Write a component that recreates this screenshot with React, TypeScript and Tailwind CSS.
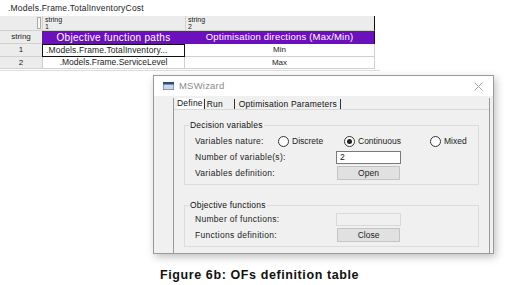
import React from 'react';

const FONT = { fontFamily: '"Liberation Sans", Arial, sans-serif' };

const Radio = ({ checked, label }: { checked?: boolean; label: string }) => (
  <div className="flex items-center gap-[3px]">
    <span className="w-[11px] h-[11px] rounded-full border border-[#333] bg-white flex items-center justify-center">
      {checked && <span className="w-[5px] h-[5px] rounded-full bg-[#222]" />}
    </span>
    <span>{label}</span>
  </div>
);

const GroupBox = ({ title, children, className }: { title: string; children: React.ReactNode; className: string }) => (
  <div className={`relative border border-[#dcdcdc] mx-[10px] ${className}`}>
    <span className="absolute left-[4px] top-[-6px] leading-[10px] bg-[#f0f0f0] px-[1px] text-[#111] tracking-[0.2px]">{title}</span>
    {children}
  </div>
);

const Row = ({ label, children }: { label: string; children?: React.ReactNode }) => (
  <div className="h-[16px] flex items-center">
    <span className="w-[151px] pl-[10px] tracking-[0.3px]">{label}</span>
    {children}
  </div>
);

const Dialog = () => (
  <div className="ml-[153px] mt-[4px] w-[341px] h-[179px] border border-[#9a9a9a] bg-[#f0f0f0] shadow-[2px_3px_8px_rgba(0,0,0,0.25)] text-[8.5px] text-[#222]">
    <div className="h-[20px] bg-white flex items-center pl-[9px] pr-[10px]">
      <svg width="11" height="8" viewBox="0 0 11 8">
        <rect x="0" y="0" width="11" height="8" fill="#c9d6ea" stroke="#4a5f86" strokeWidth="1" />
        <rect x="0" y="0" width="11" height="2.5" fill="#2e4a7a" />
      </svg>
      <span className="ml-[5px] text-[9.5px] text-[#8a8a8a] tracking-[0.2px]">MSWizard</span>
      <svg className="ml-auto" width="9" height="9" viewBox="0 0 9 9">
        <path d="M0.5 0.5 L8.5 8.5 M8.5 0.5 L0.5 8.5" stroke="#9a9a9a" strokeWidth="0.9" />
      </svg>
    </div>
    <div className="ml-[19px] mr-[3px] mt-[2px] h-[156px] border-l border-r border-[#9a9a9a]">
      <div className="h-[12px] border-b border-[#d8d8d8] flex items-end pl-[3px] leading-[10px] text-[#111]">
        <span className="bg-white pb-[1px] tracking-[0.2px]">Define</span>
        <span className="border-l border-[#333] h-[10px] ml-[1px]" />
        <span className="ml-[2px] w-[27px] tracking-[0.2px]">Run</span>
        <span className="border-l border-[#333] h-[10px]" />
        <span className="ml-[4px] tracking-[0.2px]">Optimisation Parameters</span>
        <span className="border-l border-[#333] h-[10px] ml-[3px]" />
      </div>
      <GroupBox title="Decision variables" className="mt-[15px] h-[60px] pt-[7px]">
        <Row label="Variables nature:">
          <div className="absolute left-[93px] flex items-center h-[16px]">
            <div className="w-[66px]"><Radio label="Discrete" /></div>
            <div className="w-[86px]"><Radio checked label="Continuous" /></div>
            <Radio label="Mixed" />
          </div>
        </Row>
        <Row label="Number of variable(s):">
          <div className="w-[65px] h-[13px] bg-white border border-[#7a7a7a] flex items-center pl-[3px] text-[#111]">2</div>
        </Row>
        <Row label="Variables definition:">
          <div className="ml-[1px] w-[63px] h-[14px] bg-[#e1e1e1] border border-[#c4c4c4] flex items-center justify-center">Open</div>
        </Row>
      </GroupBox>
      <GroupBox title="Objective functions" className="mt-[20px] h-[42px] pt-[5px]">
        <Row label="Number of functions:">
          <div className="w-[65px] h-[13px] bg-[#f0f0f0] border border-[#d9d9d9]" />
        </Row>
        <Row label="Functions definition:">
          <div className="ml-[1px] w-[63px] h-[14px] bg-[#e1e1e1] border border-[#c4c4c4] flex items-center justify-center">Close</div>
        </Row>
      </GroupBox>
    </div>
  </div>
);

const DataTable = () => (
  <div className="w-[375px] text-[8px] text-[#222]">
    <div className="flex h-[15px]">
      <div className="w-[42px] bg-[#ececec] border-b border-[#d0d0d0] flex justify-end pr-[1px]">
        <div className="w-[4px] h-[12px] mt-[1px] border border-[#aaa] bg-[#f8f8f8]" />
      </div>
      <div className="w-[143px] bg-[#ececec] border-b border-l border-[#d0d0d0] text-[7px] leading-[6.5px] pl-[2px] pt-[1px]">
        <div>string</div>
        <div>1</div>
      </div>
      <div className="w-[190px] bg-[#ececec] border-b border-l border-r border-l-[#d0d0d0] border-b-[#d0d0d0] border-r-[#111] text-[7px] leading-[6.5px] pl-[2px] pt-[1px]">
        <div>string</div>
        <div>2</div>
      </div>
    </div>
    <div className="flex h-[13px]">
      <div className="w-[42px] bg-[#ececec] border-b border-[#d0d0d0] flex items-center justify-center">string</div>
      <div className="w-[143px] bg-[#6c10bd] text-white text-[10px] flex items-center justify-center tracking-[0.3px]">Objective function paths</div>
      <div className="w-[190px] bg-[#6c10bd] text-white text-[9.5px] flex items-center justify-center tracking-[0.2px] border-r border-[#111]">Optimisation directions (Max/Min)</div>
    </div>
    <div className="flex h-[13px]">
      <div className="w-[42px] bg-[#ececec] border-b border-[#d0d0d0] flex items-center justify-center">1</div>
      <div className="w-[143px] border border-[#111] flex items-center pl-[3px] text-[8.5px] tracking-[0.1px]">.Models.Frame.TotalInventory...</div>
      <div className="w-[190px] border-b border-r border-[#d0d0d0] flex items-center justify-center">Min</div>
    </div>
    <div className="flex h-[12px]">
      <div className="w-[42px] bg-[#ececec] border-b border-[#d0d0d0] flex items-center justify-center">2</div>
      <div className="w-[143px] border-b border-l border-r border-[#d0d0d0] flex items-center justify-center text-[8.5px]">.Models.Frame.ServiceLevel</div>
      <div className="w-[190px] border-b border-r border-[#d0d0d0] flex items-center justify-center">Max</div>
    </div>
  </div>
);

export default function App() {
  return (
    <div className="w-[518px] h-[285px] bg-white overflow-hidden" style={FONT}>
      <div className="h-[16px] pl-[8px] pt-[3px] text-[8.5px] leading-[10px] text-[#222] tracking-[0.2px]">.Models.Frame.TotalInventoryCost</div>
      <DataTable />
      <div className="w-[380px] h-[2px] border-b border-[#dcdcdc]" />
      <Dialog />
      <div className="mt-[12px] pl-[160px] text-[12.5px] font-bold text-[#111] tracking-[0.6px]">Figure 6b: OFs definition table</div>
    </div>
  );
}
